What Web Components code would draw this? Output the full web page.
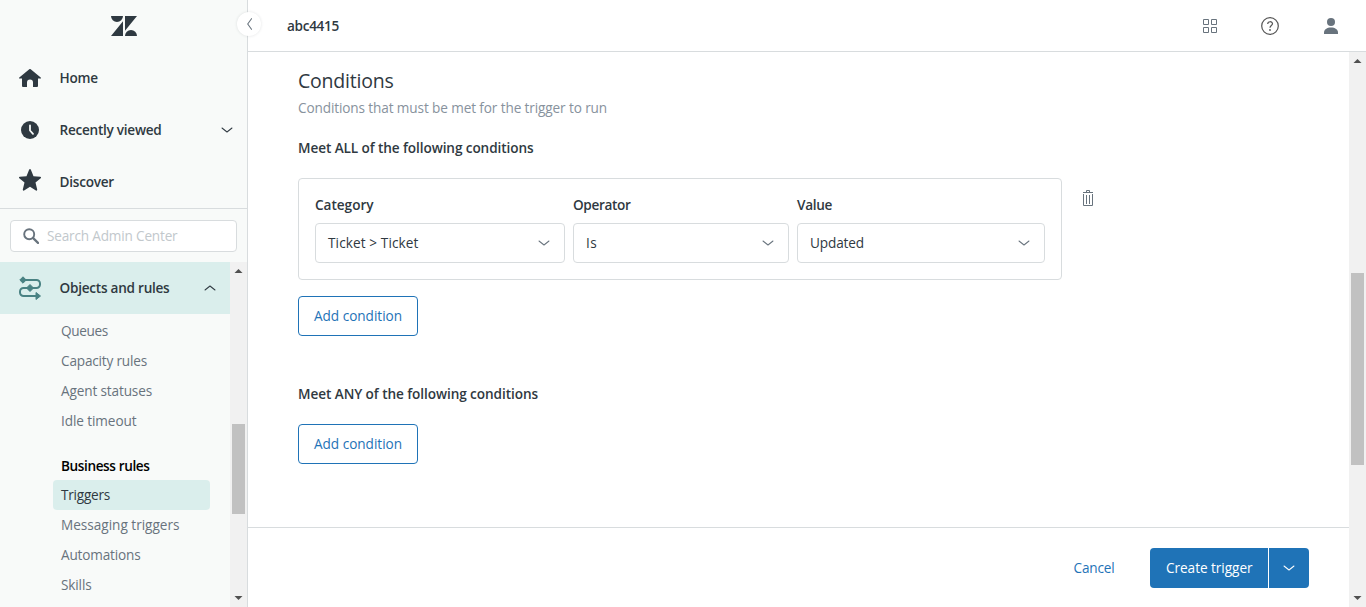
<!DOCTYPE html>
<html lang="en">
<head>
<meta charset="utf-8">
<title>Admin Center</title>
<style>
html,body{margin:0;height:100%;overflow:hidden;background:#fff}
body{font:13.6px/20px "Open Sans","Noto Sans",sans-serif;color:#2f3941}
</style>
</head>
<body>
<admin-app></admin-app>
<script>
const define=(name,html,init)=>{
  const t=document.createElement('template');t.innerHTML=html;
  customElements.define(name,class extends HTMLElement{
    connectedCallback(){
      if(this.shadowRoot)return;
      this.attachShadow({mode:'open'}).append(t.content.cloneNode(true));
      if(init)init(this,this.shadowRoot);
    }
  });
};

// A single line of text, tracked so that it fills the width in its "w" attribute.
define('ui-text','<style>:host{display:block;white-space:nowrap}span{display:inline-block}</style><span><slot></slot></span>',(el,root)=>{
  const w=+el.getAttribute('w');
  const s=root.querySelector('span');
  const n=el.textContent.length;
  const natural=s.getBoundingClientRect().width;
  if(w&&natural)s.style.letterSpacing=((w-natural)/n).toFixed(3)+'px';
  el.style.width=w+'px';
});

const icons={
  chevron:['16','<path fill="currentColor" d="M12.688 5.61a.5.5 0 01.69.718l-.066.062-5 4a.5.5 0 01-.542.054l-.082-.054-5-4a.5.5 0 01.55-.83l.074.05L8 9.359l4.688-3.75z"/>'],
  logo:['26 20','<path fill="currentColor" d="M0 0h12a6 6 0 01-12 0zM12 5.300V20H0zM14 0h12L14 14.700zM14 20a6 6 0 0112 0z"/>'],
  home:['22 18','<path fill="currentColor" d="M10.300.3a1 1 0 011.400 0l10 8.100c.6.600.3 1.200-.4 1.200H19V17a1 1 0 01-1 1h-4v-4.500a3 3 0 00-6 0V18H4a1 1 0 01-1-1V9.600H.7c-.7 0-1-.6-.4-1.200z"/>'],
  clock:['18','<circle cx="9" cy="9" r="9" fill="currentColor"/><path d="M9 4.500V9.500l3 3.300" fill="none" stroke="#f8faf9" stroke-width="1.800" stroke-linecap="round" stroke-linejoin="round"/>'],
  star:['22','<path fill="currentColor" d="M10.100.7c.4-.9 1.400-.9 1.800 0l2.600 6.500 6.700.5c.9.100 1.100.9.500 1.500l-5.200 4.400 1.700 7c.2.900-.6 1.400-1.300.9L11 17.700l-5.900 3.800c-.7.500-1.500 0-1.300-.9l1.700-7L.3 9.200c-.6-.6-.4-1.400.5-1.500l6.700-.5z"/>'],
  search:['16','<circle cx="6.200" cy="6.200" r="5" fill="none" stroke="currentColor" stroke-width="1.900"/><path d="M9.900 9.900l5.100 5" stroke="currentColor" stroke-width="2.200" stroke-linecap="round"/>'],
  rules:['22 24','<path fill="none" stroke="currentColor" stroke-width="2" d="M4 4h13.500a3.500 3.500 0 013.500 3.500v1a3.500 3.500 0 01-3.500 3.500h-13A3.500 3.500 0 001 15.500v1A3.500 3.500 0 004.500 20H18"/><path fill="currentColor" stroke="currentColor" stroke-linejoin="round" d="M4 .8L7.200 4 4 7.200.8 4zM11 8.500l3.500 3.500L11 15.500 7.500 12zM17 16.500l4.500 3.500-4.500 3.500z"/>'],
  grid:['14','<path fill="none" stroke="currentColor" d="M.5.500h5v5h-5zM8.500.500h5v5h-5zM.5 8.500h5v5h-5zM8.500 8.500h5v5h-5z"/>'],
  help:['18','<circle cx="9" cy="9" r="8.300" fill="none" stroke="currentColor" stroke-width="1.200"/><path d="M6.700 7c0-3 4.800-3 4.800-.2C11.500 8.500 9 8.600 9 10.700" fill="none" stroke="currentColor" stroke-width="1.200"/><circle cx="9" cy="13" r=".9" fill="currentColor"/>'],
  user:['14 16','<circle cx="7" cy="4" r="4" fill="currentColor"/><path fill="currentColor" d="M0 16v-1.500C0 11.500 3 9.500 7 9.500s7 2 7 5V16z"/>'],
  trash:['10 16','<path fill="none" stroke="currentColor" d="M0 2.500h10M3.500 2.500v-2h3v2M.5 4v11.500h9V4M3.500 5v9M6.500 5v9"/>'],
  back:['5 12','<path fill="none" stroke="currentColor" stroke-width="1.100" stroke-linecap="round" stroke-linejoin="round" d="M4.500.7L.7 6l3.800 5.300"/>']
};
define('ui-icon','<style>:host{display:block;flex:none}svg{display:block}</style>',(el,root)=>{
  const [size,art]=icons[el.getAttribute('name')];
  const [w,h=w]=size.split(' ');
  root.innerHTML+=`<svg width="${w}" height="${h}" viewBox="0 0 ${w} ${h}">${art}</svg>`;
});

define('scroll-bar',`<style>
:host{display:flex;flex-direction:column;flex:none;width:17px;background:#f1f1f1;box-sizing:border-box}
svg{display:block;flex:none}
i{display:block;margin:var(--top) 2px auto;height:var(--thumb);background:#c1c1c1}
</style><svg width="17" height="17"><path d="M4.500 11h8L8.500 7z" fill="#505050"/></svg><i></i><svg width="17" height="17"><path d="M4.500 6h8l-4 4z" fill="#505050"/></svg>`);

define('nav-item',`<style>
:host{display:flex;align-items:center;height:52px;box-sizing:border-box;font-weight:600}
.i{width:60px;margin-right:-.5px;display:flex;justify-content:center;flex:none}
.end{margin-left:auto;margin-right:12px}
</style><div class="i"><slot name="icon"></slot></div><slot></slot><div class="end"><slot name="end"></slot></div>`);

define('nav-link',`<style>
:host{display:block;height:30px;line-height:30px;margin:0 20px 0 53px;padding-left:8px;box-sizing:border-box;color:#68737d;border-radius:4px}
:host([active]){background:#daeeec;color:#2f3941}
:host([heading]){color:#000;font-weight:600;margin-top:15px;height:29px}
</style><slot></slot>`);

define('side-bar',`<style>
:host{display:flex;flex-direction:column;width:248px;flex:none;box-sizing:border-box;border-right:1px solid #d8dcde;background:#f8faf9}
.logo{height:52px;display:flex;justify-content:center;align-items:center}
.search{border-top:1px solid #d8dcde;padding:11px 10px 10px}
.box{height:32px;box-sizing:border-box;border:1px solid #d8dcde;border-radius:4px;background:#fff;display:flex;align-items:center;gap:8px;padding-left:12px;color:#c2c8cc}
.box ui-icon{color:#68737d}
.scroll{display:flex;flex:1;min-height:0}
.list{flex:1;overflow:hidden}
.section{background:#daeeec;margin-bottom:2px}
.teal{color:#498283}
.up{transform:rotate(180deg)}
scroll-bar{--top:145px;--thumb:90px}
</style>
<div class="logo"><ui-icon name="logo"></ui-icon></div>
<nav-item><ui-icon slot="icon" name="home"></ui-icon><ui-text w="38.500">Home</ui-text></nav-item>
<nav-item><ui-icon slot="icon" name="clock"></ui-icon><ui-text w="102">Recently viewed</ui-text><ui-icon slot="end" name="chevron"></ui-icon></nav-item>
<nav-item><ui-icon slot="icon" name="star" style="margin-bottom:4px"></ui-icon><ui-text w="54.500">Discover</ui-text></nav-item>
<div class="search"><div class="box"><ui-icon name="search"></ui-icon><ui-text w="130.500">Search Admin Center</ui-text></div></div>
<div class="scroll"><div class="list">
<nav-item class="section"><ui-icon slot="icon" name="rules" class="teal"></ui-icon><ui-text w="110">Objects and rules</ui-text><ui-icon slot="end" name="chevron" class="up"></ui-icon></nav-item>
<nav-link><ui-text w="47">Queues</ui-text></nav-link>
<nav-link><ui-text w="86">Capacity rules</ui-text></nav-link>
<nav-link><ui-text w="91">Agent statuses</ui-text></nav-link>
<nav-link><ui-text w="75.500">Idle timeout</ui-text></nav-link>
<nav-link heading><ui-text w="88.500">Business rules</ui-text></nav-link>
<nav-link active><ui-text w="49">Triggers</ui-text></nav-link>
<nav-link><ui-text w="118.500">Messaging triggers</ui-text></nav-link>
<nav-link><ui-text w="79.500">Automations</ui-text></nav-link>
<nav-link><ui-text w="30.500">Skills</ui-text></nav-link>
</div><scroll-bar></scroll-bar></div>`);

define('top-bar',`<style>
:host{display:flex;align-items:center;height:52px;flex:none;box-sizing:border-box;border-bottom:1px solid #d8dcde;padding:0 28px 0 39px;position:relative;font-weight:600}
.tools{margin-left:auto;display:flex;align-items:center;color:#68737d}
.help{margin:0 45px 0 44px;color:#555}
.collapse{position:absolute;left:-11px;top:12px;width:24px;height:24px;border-radius:50%;background:#fff;box-shadow:0 0 3px rgba(47,57,65,.14);display:flex;align-items:center;justify-content:center;color:#68737d}
</style>
<div class="collapse"><ui-icon name="back"></ui-icon></div>
<ui-text w="52">abc4415</ui-text>
<div class="tools"><ui-icon name="grid"></ui-icon><ui-icon class="help" name="help"></ui-icon><ui-icon name="user"></ui-icon></div>`);

define('select-field',`<style>
:host{display:block}
.label{font-weight:600;margin-bottom:8px}
.box{height:40px;box-sizing:border-box;border:1px solid #d8dcde;border-radius:4px;display:flex;align-items:center;justify-content:space-between;padding:0 12px}
ui-icon{color:#68737d}
</style><div class="label"><slot name="label"></slot></div><div class="box"><slot></slot><ui-icon name="chevron"></ui-icon></div>`);

define('ui-button',`<style>
:host{display:flex;align-items:center;box-sizing:border-box;height:40px;width:120px;padding-left:15px;border:1px solid #1f73b7;border-radius:4px;color:#1f73b7}
</style><slot></slot>`);

define('condition-form',`<style>
:host{display:block;flex:1;min-height:0;overflow:hidden;padding:15px 0 0 50px}
.title{font-size:19.500px;line-height:28px}
.desc{color:#87929d;margin-top:3px}
.sub{font-weight:600;margin-top:20px}
.row{display:flex;margin:20px 0 16px}
.card{width:764px;height:102px;box-sizing:border-box;border:1px solid #d8dcde;border-radius:4px;padding:16px;display:grid;grid-template-columns:250px 216px 248px;gap:8px}
.trash{margin:12px 0 0 21px;color:#68737d}
.any{margin:48px 0 20px}
</style>
<ui-text class="title" w="95.500">Conditions</ui-text>
<ui-text class="desc" w="309">Conditions that must be met for the trigger to run</ui-text>
<ui-text class="sub" w="235.500">Meet ALL of the following conditions</ui-text>
<div class="row"><div class="card">
<select-field><ui-text slot="label" w="58.500">Category</ui-text><ui-text w="90.500">Ticket &gt; Ticket</ui-text></select-field>
<select-field><ui-text slot="label" w="57.500">Operator</ui-text><ui-text w="11">Is</ui-text></select-field>
<select-field><ui-text slot="label" w="35">Value</ui-text><ui-text w="54">Updated</ui-text></select-field>
</div><ui-icon class="trash" name="trash"></ui-icon></div>
<ui-button><ui-text w="88">Add condition</ui-text></ui-button>
<ui-text class="sub any" w="240">Meet ANY of the following conditions</ui-text>
<ui-button><ui-text w="88">Add condition</ui-text></ui-button>`);

define('action-footer',`<style>
:host{display:flex;justify-content:flex-end;align-items:center;height:80px;flex:none;box-sizing:border-box;border-top:1px solid #d8dcde;padding:1px 40px 0 0;color:#1f73b7}
.split{display:flex;gap:1px;margin-left:35.500px;color:#fff}
.split>*{background:#1f73b7;height:40px;box-sizing:border-box;display:flex;align-items:center}
.main{width:118px;padding-left:16px;border-radius:4px 0 0 4px}
.more{width:40px;justify-content:center;border-radius:0 4px 4px 0}
</style><ui-text w="41">Cancel</ui-text><div class="split"><div class="main"><ui-text w="86.500">Create trigger</ui-text></div><div class="more"><ui-icon name="chevron"></ui-icon></div></div>`);

define('admin-app',`<style>
:host{display:flex;height:607px;width:1366px;overflow:hidden}
.main{flex:1;min-width:0;display:flex;flex-direction:column}
.work{flex:1;display:flex;min-height:0}
.page{flex:1;display:flex;flex-direction:column;min-width:0}
scroll-bar{--top:204px;--thumb:192px}
</style><side-bar></side-bar><div class="main"><top-bar></top-bar><div class="work"><div class="page"><condition-form></condition-form><action-footer></action-footer></div><scroll-bar></scroll-bar></div></div>`);
</script>
</body>
</html>
